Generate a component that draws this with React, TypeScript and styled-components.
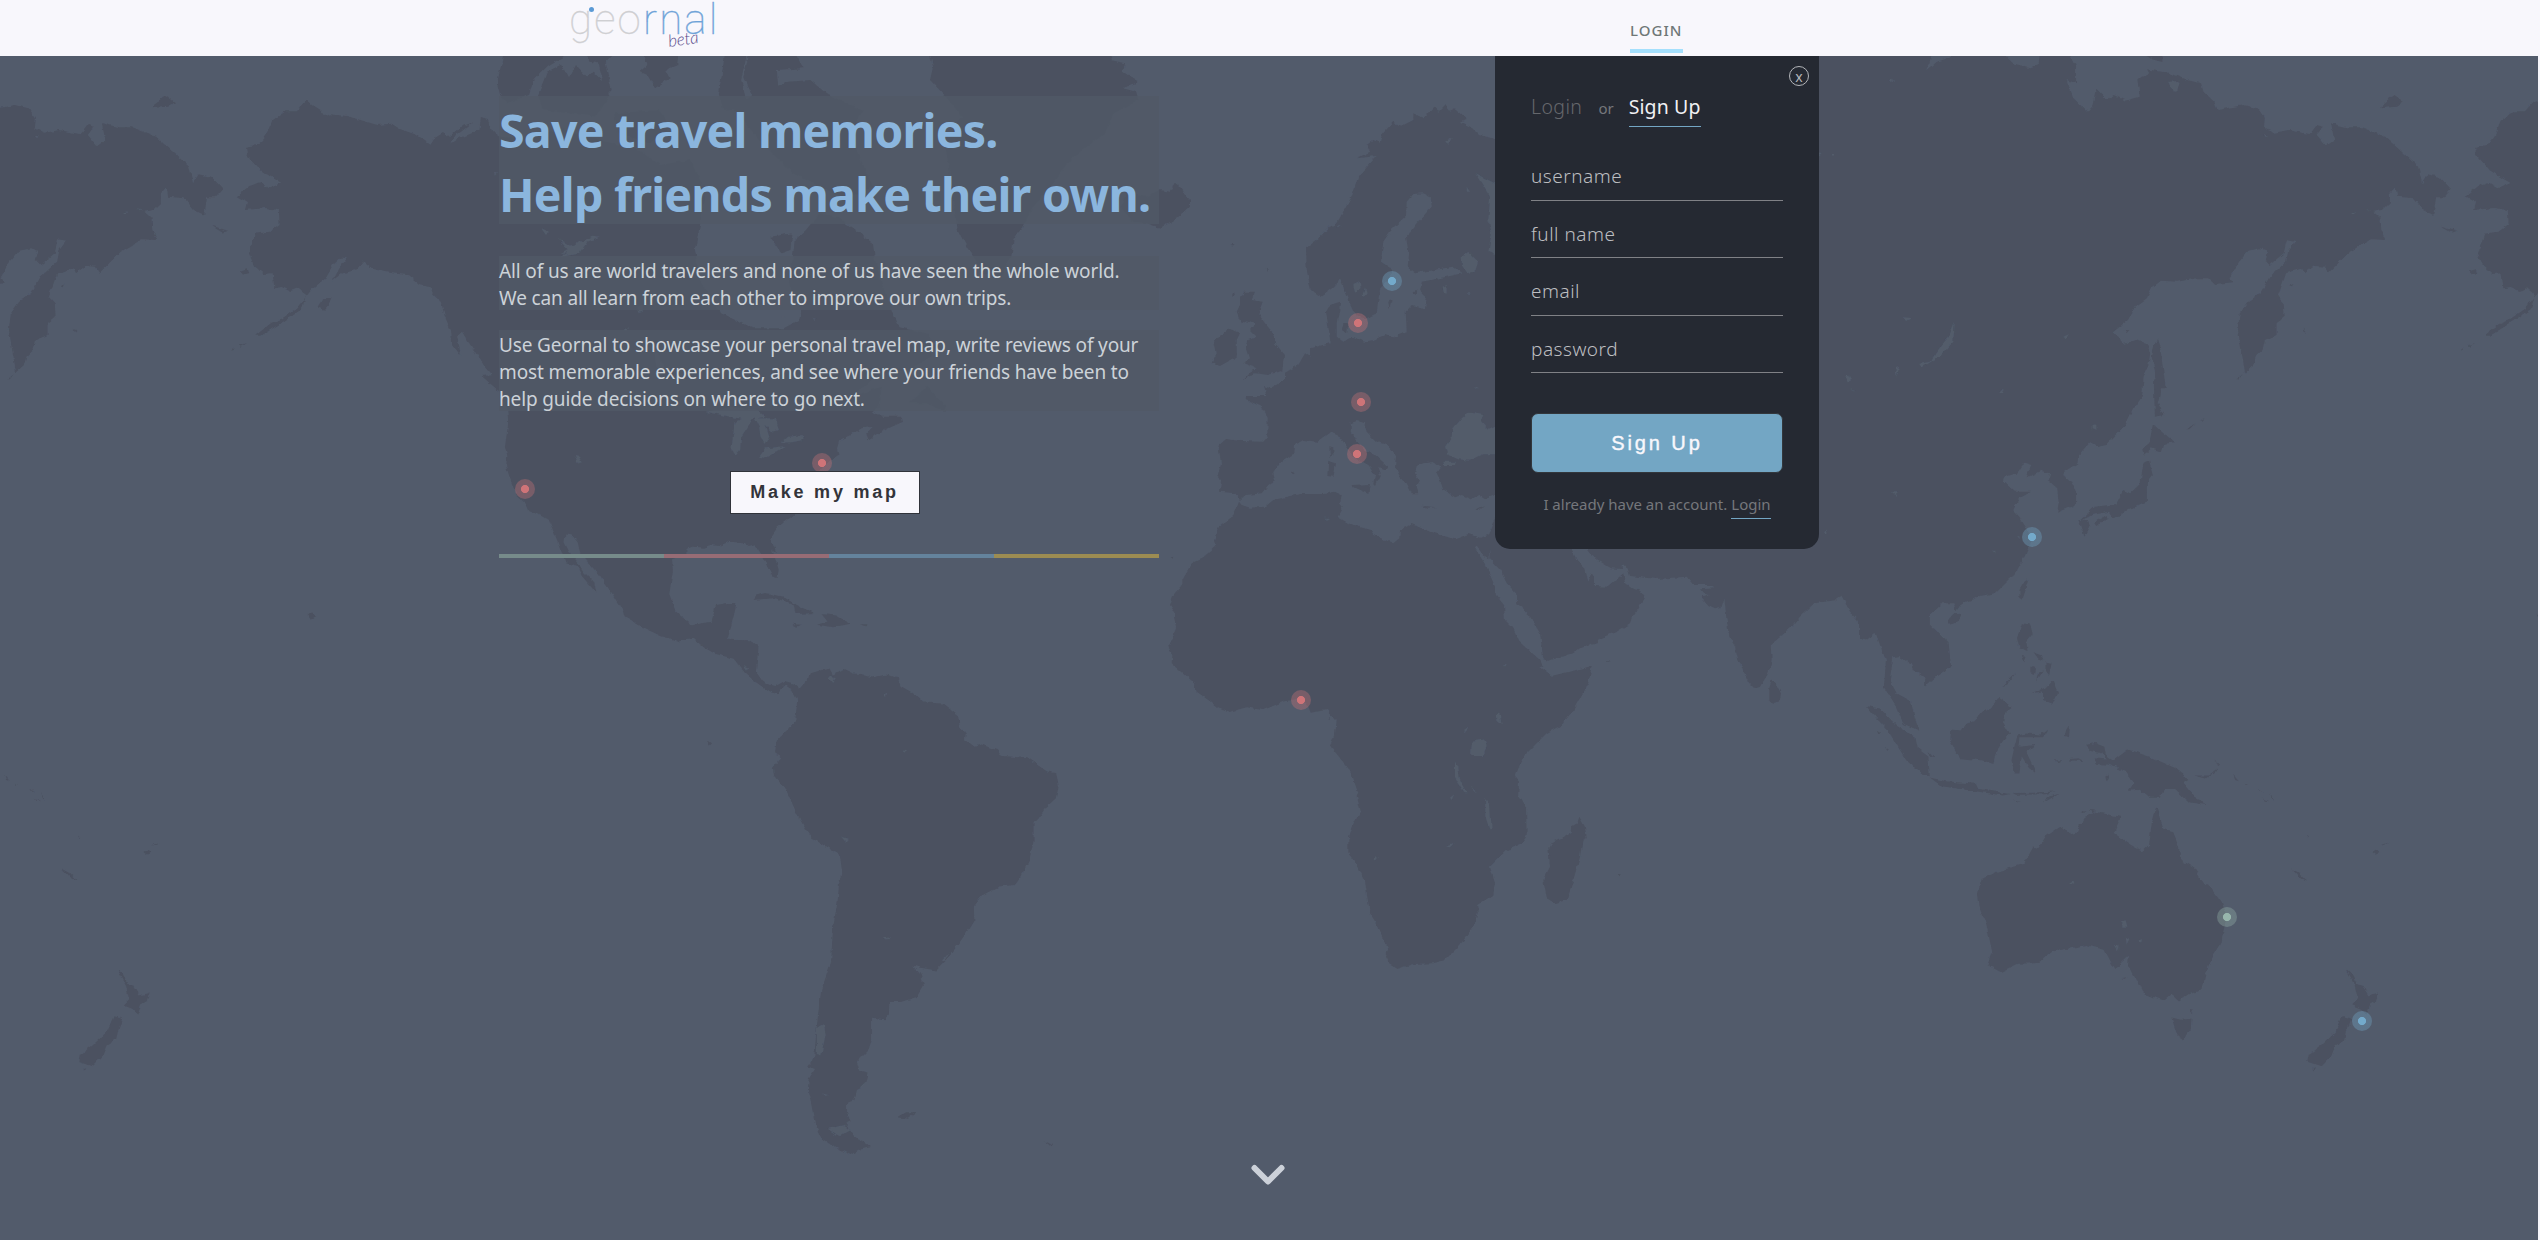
import React from 'react';
import styled, { createGlobalStyle } from 'styled-components';

/* ---------- map data ---------- */

// Each sheet covers one part of the world; its points are scaled onto the page.
const sheets = {
  page: [1, 1, 0, 0],
  pacific: [2.45, 2.529, 0, 40],
  arctic: [2.24, 3, 480, 0],
  north: [2.24, 3, 480, 240],
  south: [2.8, 2.0103, 640, 400],
  europe: [3, 3, 1140, 40],
  africa: [3, 3, 1140, 480],
  india: [3, 3, 1480, 500],
  siberia: [2.119, 3, 1800, 40],
  oceania: [2.119, 2.613, 1800, 500],
} as const;

type Sheet = keyof typeof sheets;
type Stretch = [Sheet, string];

const toPath = (shape: Stretch[]) => {
  const out: string[] = [];
  shape.forEach(([name, text]) => {
    const [sx, sy, ox, oy] = sheets[name];
    const n = text.trim().split(/[\s,]+/).map(Number);
    for (let i = 0; i + 1 < n.length; i += 2) {
      out.push(`${(ox + n[i] / sx).toFixed(1)} ${(oy + n[i + 1] / sy).toFixed(1)}`);
    }
  });
  return `M${out.join('L')}Z`;
};

const continents: Stretch[][] = [
  // North America
  [
    ['pacific', '750 152,765 165,785 178,795 192,810 188,850 192,885 203,925 215,960 212,980 225,1015 238,1055 265,1065 248,1085 235,1100 245,1125 222,1158 208,1130 232,1110 245,1102 265,1125 248,1155 235,1175 225,1178 195,1195 200,1210 235,1225 245'],
    ['page', '530 138,560 128,600 140,640 150,660 165,690 160,700 180,705 200,700 225,695 250,700 280,712 300'],
    ['north', '540 220,610 265,680 265,715 240,720 210,700 170,690 120,700 60,705 0'],
    ['arctic', '730 690,760 640,800 650,850 700'],
    ['north', '880 10,885 60,900 130,925 220,940 262,1000 280,1020 320,1010 350,960 390,900 400,870 430,830 470,900 440,895 500,880 515,900 530,945 530,948 545,915 565,870 598,865 580,880 560,855 565,830 585,805 600,800 625,803 645,775 670,760 700,740 750,735 780,700 825,665 865,650 895,665 940'],
    ['south', '370 300,388 340,385 358,370 355,345 318,320 290,300 294,285 287,250 285,225 292,205 290,180 297,150 295,130 300,130 310,90 320,92 345,82 390,100 425,145 453,200 445,213 412,245 408,270 408,262 435,245 482,310 483,332 495,325 545,350 570,380 575,405 565,430 570,447 580,435 600,420 580,405 572,385 592,355 583,320 565,295 550,262 520,210 510,180 498,150 480,110 485,60 475,0 455'],
    ['pacific', '1530 1460,1525 1440,1500 1400,1465 1350,1440 1320,1422 1300,1415 1270,1400 1250,1385 1248,1383 1270,1395 1295,1415 1320,1430 1345,1455 1370,1462 1400,1425 1355,1415 1330,1385 1320,1365 1265,1345 1215,1320 1200,1297 1192,1290 1175,1265 1150,1250 1110,1240 1078,1243 1050,1237 1030,1245 970,1243 935,1225 890,1180 850,1205 848,1190 830,1165 790,1145 760,1132 738,1120 750,1130 800,1108 770,1105 735,1090 700,1080 660,1060 640,1055 625,1030 620,1000 595,950 588,910 578,890 560,875 580,840 590,815 610,830 580,850 552,835 550,815 570,795 605,765 630,745 655,725 680,690 705,665 715,625 748,640 748,690 715,740 680,750 645,730 628,712 635,690 625,672 628,668 590,645 592,622 570,610 540,625 490,660 485,685 465,683 430,650 425,600 430,605 410,580 395,610 370,635 360,660 375,690 362,670 350,640 330,605 290,603 270,635 265,650 245,665 205,700 180,725 180'],
  ],
  // South America
  [['south', '430 570,447 580,470 562,475 550,500 545,530 540,540 552,570 541,597 550,620 551,650 558,690 552,722 560,730 575,762 588,795 608,850 610,890 632,895 655,912 670,910 682,937 697,955 692,1000 704,1010 715,1085 720,1140 747,1165 750,1173 775,1165 800,1135 820,1112 845,1102 850,1102 885,1090 925,1065 960,1050 975,1005 978,960 995,935 1018,936 1045,910 1075,885 1100,860 1125,830 1147,790 1142,765 1137,785 1155,795 1175,775 1200,730 1210,698 1210,697 1235,685 1245,650 1242,650 1285,640 1305,607 1330,615 1348,637 1352,632 1370,607 1388,600 1408,580 1412,580 1435,590 1450,575 1455,600 1480,645 1502,610 1508,590 1518,540 1500,510 1485,490 1455,478 1410,470 1390,472 1365,490 1345,470 1340,488 1320,495 1260,500 1225,508 1185,535 1130,540 1060,553 1010,557 975,565 945,560 915,480 880,457 855,435 825,410 785,375 755,372 738,395 718,378 710,383 685,410 665,435 645,440 605']],
  // Greenland
  [
    ['arctic', '1005 150,1015 200,1008 240,1040 285,1080 350,1040 420,1050 500,1060 600,1070 690'],
    ['north', '1090 20,1130 100,1165 110,1190 50,1195 0'],
    ['arctic', '1215 680,1240 620,1300 520,1330 470,1400 400,1420 340,1475 300,1470 275,1440 265,1475 245,1440 215,1445 190,1412 180,1420 150'],
  ],
  // Eurasia and Africa
  [
    ['europe', '880 200,895 215,915 195,930 212,945 205,980 235,960 245,1000 265,1020 285,1065 297'],
    ['page', '1600 150,1750 100'],
    ['siberia', '40 40,280 40,270 90,290 65,320 52,330 40,430 40,455 75,490 85,508 70,510 40,570 40,585 80,585 130,565 120,580 175,608 215,620 195,627 145,650 178,665 165,690 182,720 170,715 120,740 100,735 88,780 98,820 120,850 130,855 155,878 185,885 210,940 195,970 205,985 235,983 265,1005 278,1035 270,1080 283,1095 255,1108 260,1095 285,1115 318,1132 300,1125 250,1160 262,1190 262,1240 290,1275 335,1310 380,1318 430,1330 403,1355 410,1380 448,1365 472,1348 472,1342 525,1320 510,1300 475,1265 470,1262 440,1250 460,1250 490,1235 510,1215 515,1230 535,1232 570,1242 600,1210 598,1165 635,1120 698,1112 680,1090 678,1070 700,1065 685,1030 700,1020 740,1012 770,1025 790,1027 830,1010 850,1010 885,985 900,980 930,965 950,960 975,943 997,935 930,928 870,932 820,950 785,975 760,995 710,1030 665,1035 630,1050 602,1032 598,1025 640,995 675,985 660,990 632,975 625,950 632,925 675,910 715,920 730,880 735,865 715,840 715,800 725,765 722,745 745,735 775,710 800,695 840,662 878,680 895,685 912,710 900,735 910,742 940,738 980,728 1010,725 1070,705 1110,690 1155,665 1190,650 1215,632 1220,615 1207,590 1245,588 1270,560 1295,558 1305,575 1330,585 1355,585 1395,545 1418,548 1390,545 1345,525 1320,530 1300,510 1292,478 1315,490 1275,475 1268,460 1300,435 1310,432 1325,455 1355,490 1355,465 1375,450 1408,465 1430,480 1465'],
    ['oceania', '493 100,475 150,455 195,415 243,385 250,340 272,330 290,325 270,300 270,275 300,275 325,315 375,320 435,290 460,265 487,265 465,240 445,235 430,210 408,198 410,190 470,205 505,235 525,243 570,253 603,220 585,205 540,178 490,182 420,160 347,140 367,125 362,125 320,105 290,88 250,75 262,30 270,0 305'],
    ['india', '940 375,880 425,872 440,875 480,865 520,840 560,822 567,805 550,790 510,775 480,765 440,748 410,740 360,733 295,725 320,705 325,685 315,665 292,690 285,675 282,660 265,705 262,690 255,640 255,620 230,530 237,450 228,440 197,428 197,428 207,390 205,350 180,325 148,310 120,265 120,275 148,290 180,315 205,325 245,335 220,342 230,342 258,385 260,430 220,435 250,455 265,480 272,495 293,470 335,455 355,450 370,410 395,360 415,350 430,300 445,280 460,205 482,190 478,185 440,180 400,150 350,112 310,108 280,80 250,60 210,32 180'],
    ['africa', '1048 235,1050 210,1045 235,1030 225,1010 200,1005 205,1040 260,1065 320,1068 345,1092 375,1095 420,1120 445,1138 485,1200 540,1210 560,1200 560,1235 587,1275 578,1355 558,1345 610,1300 690,1265 735,1220 760,1150 830,1125 890,1137 905,1135 945,1158 980,1160 1065,1140 1095,1100 1110,1050 1160,1065 1210,1060 1245,1012 1275,1013 1300,1000 1340,960 1395,915 1440,880 1450,820 1452,772 1467,748 1450,738 1430,745 1405,715 1340,690 1300,682 1250,675 1205,655 1160,625 1120,625 1080,640 1035,662 990,650 950,655 940,635 885,625 865,570 797,585 760,590 722,560 690,512 698,505 680,480 655,430 665,370 690,320 682,265 697,235 685,205 660,170 635,158 605,120 570,95 550,97 525,85 500,100 470,108 440,102 410,103 395,90 375,100 345,130 310,130 295,160 245,190 232,225 200,222 180,235 140,280 108,297 65,305 75,330 83,375 80,400 60,480 42,550 42,585 35,605 45,600 70,608 80,592 110,630 132,690 150,700 165,760 190,778 175,780 150,815 132,870 155,945 178,985 162,1020 173,1045 165,1065 110'],
    ['europe', '1085 1365,1065 1365,1035 1378,1015 1365,995 1378,965 1365,945 1372,910 1350,900 1320,890 1300,905 1280,880 1266,850 1270,830 1278,825 1300,840 1320,830 1340,835 1360,815 1360,800 1330,780 1310,765 1280,768 1245,740 1215,710 1205,680 1175,672 1150,650 1143,632 1150,632 1175,650 1200,680 1235,700 1240,745 1280,740 1290,715 1280,722 1300,705 1335,700 1330,705 1305,690 1280,640 1250,610 1205,595 1185,570 1177,530 1205,490 1200,465 1215,463 1240,420 1270,400 1300,405 1320,385 1335,365 1360,320 1365,303 1380,285 1360,240 1355,243 1320,232 1310,243 1270,235 1215,255 1197,300 1203,370 1205,382 1190,383 1130,365 1100,320 1080,322 1068,380 1068,372 1038,390 1045,435 1020,435 998,475 975,495 940,510 950,510 925,545 915,572 910,565 860,558 815,570 795,600 785,598 810,590 850,590 890,610 905,640 890,670 905,700 900,740 882,760 892,800 875,797 815,815 795,855 805,860 775,840 755,845 725,920 710,965 700,940 680,850 695,825 700,800 680,805 635,798 590,830 550,875 500,872 470,850 460,820 462,800 485,798 530,750 575,730 605,723 665,760 690,745 720,720 745,710 820,680 835,650 830,625 775,600 718,585 740,545 770,512 750,500 690,498 625,530 600,570 560,590 550,635 470,645 440,655 410,710 348,650 355,690 335,680 315,700 300,720 310,725 285,760 245,780 260,820 240,820 220,850 235'],
  ],
  // Australia
  [['oceania', '755 803,770 860,790 865,803 905,806 940,835 962,855 1000,865 1005,895 1055,905 1090,890 1160,875 1190,858 1245,853 1282,825 1290,803 1308,787 1290,770 1307,730 1292,720 1265,705 1240,695 1215,697 1190,680 1210,668 1228,645 1175,605 1163,580 1170,535 1180,505 1210,460 1212,425 1233,397 1215,407 1180,395 1110,378 1060,375 1030,385 990,420 970,475 950,495 905,505 910,520 880,550 855,575 873,585 870,600 830,628 815,680 828,665 870,700 900,725 918,740 900,745 845']],
];

const islandSheets: [Sheet, string[]][] = [
  ['arctic', [
    '55 150,38 250,45 285,60 310,110 285,120 240,150 200,210 150',
    '150 215,130 285,140 330,260 350,290 285,275 240,255 215,240 230,215 195,200 230,180 195',
    '235 150,245 185,265 190,285 285,295 270,280 190,310 150',
    '362 150,375 195,358 215,375 225,392 265,425 235,415 210,442 195,445 150',
    '550 150,535 285,545 330,600 320,585 240,600 150',
    '605 150,590 230,610 285,570 330,600 380,640 440,700 520,820 600,880 560,850 470,830 400,860 330,780 285,740 240,690 245,668 260,665 210,725 205,700 150',
    '300 340,400 330,430 380,380 430,310 400',
  ]],
  ['north', ['960 490,1000 440,1045 500,1040 515,1000 490', '650 -10,700 -20,695 30,675 40']],
  ['south', [
    '315 402,325 393,350 388,400 395,445 415,490 428,435 430,430 412,380 398',
    '508 430,550 433,590 450,540 457,495 452,525 445',
    '425 450,452 452,440 456', '615 451,637 451,635 455',
    '722 1442,745 1432,775 1432,750 1445', '1128 1487,1155 1498,1150 1500', '192 685,202 690,195 695',
  ]],
  ['pacific', [
    '752 1452,765 1448,775 1460,762 1467', '520 470,560 483,545 487,530 478',
    '778 675,790 655,812 650,808 665,795 682', '588 585,605 580,608 590,595 593', '585 772,603 766,590 776', '566 786,575 778,572 784',
  ]],
  ['europe', [
    '-60 500,-40 460,20 470,57 450,90 455,105 430,120 440,130 455,150 480,150 500,130 520,95 545,60 563,20 550,-20 545',
    '315 755,345 755,335 780,368 785,355 820,375 850,400 880,405 910,435 945,430 990,385 1005,345 1000,308 1020,330 995,350 985,310 970,330 955,320 925,325 900,350 890,330 870,345 850,320 840,305 850,290 815,300 795,300 770',
    '265 865,300 880,290 900,290 950,240 978,215 968,230 940,222 900,250 885',
    '568 1222,580 1225,580 1245,570 1250', '565 1262,585 1270,578 1310,562 1308', '638 1335,690 1332,685 1362,640 1342',
    '845 1397,890 1402,860 1403', '1005 1410,1035 1395,1020 1410', '452 1297,460 1292,468 1297,460 1303',
    '610 852,625 850,622 880,605 870', '745 785,755 780,748 805', '272 612,284 612,276 620', '376 680,384 685,380 693', '815 755,832 750,830 762',
    '278 760,288 758,276 775',
  ]],
  ['africa', [
    '1318 1010,1335 1040,1340 1075,1328 1080,1320 1130,1300 1200,1280 1260,1245 1270,1220 1255,1210 1200,1230 1160,1225 1100,1235 1085,1265 1075,1295 1055,1297 1038,1312 1030',
    '1398 543,1412 545,1400 549', '1433 1182,1440 1182,1436 1186', '92 232,100 230,98 236', '565 715,571 710,568 718',
  ]],
  ['india', ['875 540,890 555,903 580,900 600,880 608,868 600,868 560']],
  ['siberia', [
    '757 895,765 940,775 1045,765 1045,758 1090,770 1125,752 1130,750 1040,752 990,745 950,750 920',
    '748 1152,770 1180,795 1207,770 1212,765 1235,745 1225,728 1245,725 1225,740 1210',
    '590 1440,610 1440,615 1460,603 1490,597 1470',
    '728 1268,740 1262,748 1305,735 1330,735 1385,715 1395,690 1412,665 1437,655 1415,620 1425,590 1445,625 1400,670 1392,685 1350,700 1360,722 1330,725 1290',
    '625 1445,650 1425,652 1438,630 1455', '1232 205,1235 190,1260 165,1280 187,1265 200,1240 203',
    '725 40,745 58,768 66,768 40', '925 1018,938 1003,930 1018', '818 1168,838 1150,825 1168', '850 1140,858 1133,853 1142',
    '1036 738,1045 732,1042 742', '1065 865,1072 878,1067 875', '688 870,698 870,692 880',
  ]],
  ['oceania', [
    '313 315,325 297,342 298,335 320,318 325', '465 235,480 205,485 210,472 258,465 250',
    '470 322,488 325,493 350,480 370,482 395,465 385,460 360', '490 505,520 490,535 470,547 505,535 535,515 525,515 500',
    '470 408,480 410,475 425', '495 398,512 405,518 420,505 415', '520 425,533 428,528 458,520 445', '488 435,500 440,498 455,488 450', '505 450,515 445,505 465,500 475',
    '428 488,458 450,440 480',
    '420 515,450 542,435 555,430 580,445 610,430 630,415 660,410 690,385 680,340 675,330 655,318 630,320 600,340 602,350 585,370 578,385 555,405 545',
    '140 538,170 545,205 590,245 620,250 650,272 670,275 722,260 718,225 680,185 600,165 575',
    '275 725,310 735,375 742,380 755,445 768,430 772,375 762,300 748', '450 766,490 765,540 762,520 769,460 770', '512 793,530 775,553 766,520 788', '450 782,468 792,460 790',
    '460 615,480 610,510 613,525 600,515 620,465 620,463 645,500 640,480 660,490 685,500 715,485 700,470 670,465 715,455 715,448 680',
    '565 595,572 590,570 620,560 615', '568 677,590 675,602 682,570 681', '540 680,555 680,545 685', '647 720,655 715,650 738',
    '605 640,625 635,645 645,648 665,665 680,695 652,740 670,795 700,825 730,812 740,835 775,862 797,825 790,795 755,770 755,765 778,740 778,720 757,695 760,708 740,690 710,655 692,630 690,622 675,650 678,640 662,615 655',
    '835 720,865 720,885 700,880 710,860 728', '878 680,893 697,885 692', '918 718,930 735,922 732', '940 738,950 745,944 744', '970 753,982 763,975 762', '996 766,1005 785,1000 780', '980 780,995 787,985 786',
    '270 655,285 675,275 672', '163 603,172 610,166 612', '180 645,188 652,185 656', '595 815,608 813,600 819', '612 810,628 812,620 818',
    '787 1352,808 1358,832 1355,830 1380,812 1410,800 1400', '826 1330,833 1332,830 1342',
    '1157 1225,1170 1240,1180 1265,1192 1270,1205 1295,1226 1287,1220 1310,1208 1318,1200 1345,1190 1330,1170 1320,1182 1305,1175 1265',
    '1150 1348,1168 1355,1160 1385,1155 1410,1135 1425,1125 1455,1105 1480,1075 1468,1078 1450,1105 1425,1135 1390', '1086 1487,1092 1485,1088 1493',
    '1040 962,1058 975,1075 995,1060 988', '1213 920,1220 914,1230 920,1220 927', '1230 903,1247 895,1240 901', '1074 876,1080 884,1076 882', '683 1249,692 1247,688 1252',
  ]],
];

const waterSheets: [Sheet, string[]][] = [
  ['pacific', [
    '1365 500,1395 520,1420 515,1450 495,1470 497,1440 510,1418 540,1370 550,1395 535', '1408 1052,1423 1065,1418 1072', '1325 475,1345 485,1335 490', '1210 333,1218 335,1212 341',
  ]],
  ['north', [
    '570 545,590 535,612 535,600 560,585 590,583 630,572 648,563 630', '505 515,560 500,620 510,640 530,600 540,560 530',
    '615 535,660 535,670 570,655 575,640 555,648 590,640 612,628 590,625 560', '625 650,640 625,685 618,660 640,640 655', '675 608,690 590,722 585,725 600,700 607',
    '180 40,205 20,225 0,235 10,210 35', '355 220,350 200,365 195,365 215', '320 270,332 262,328 272', '675 230,682 225,685 235', '745 230,755 235,748 240', '390 330,405 350,410 400,395 380',
    '212 648,222 650,228 668,218 668',
  ]],
  ['south', ['528 560,538 552,548 562,540 570', '563 878,582 882,575 888', '683 592,693 588,688 597', '736 702,748 704,742 707', '683 1082,700 1080,692 1087', '512 1394,528 1397,518 1399', '495 1262,515 1255,520 1275,508 1318,495 1315', '290 535,306 540,300 545', '525 1465,570 1458,590 1468,560 1480,545 1475', '848 1125,867 1110,855 1127']],
  ['europe', [
    '1110 1243,1030 1243,990 1262,950 1258,925 1245,918 1220,938 1190,940 1165,965 1135,985 1118,1005 1120,1030 1125,1022 1145,1045 1170,1065 1160,1110 1160',
    '965 650,985 635,1015 665,1005 695,980 700,965 675', '1005 400,1065 430,1080 500,1080 650,1045 635,1055 580,1045 540,1050 470', '640 735,660 725,662 745,645 755', '675 745,680 760,670 775,668 762',
    '915 305,933 295,925 312', '908 740,920 735,920 758,910 755', '590 560,605 558,595 567', '980 440,990 455,980 455', '910 1265,948 1265,945 1275,912 1275', '1002 1040,1018 1048,1008 1048', '980 760,992 760,986 768',
  ]],
  ['africa', [
    '995 785,1035 778,1040 800,1028 828,993 828', '945 845,955 860,960 900,983 940,975 940,945 895', '1035 958,1050 970,1055 1045,1048 1045,1036 1010', '1070 695,1078 700,1085 730,1072 720',
    '972 750,985 740,978 757', '930 950,943 940,935 957', '990 920,1012 937,995 930', '700 1135,717 1130,708 1141', '918 1100,942 1090,930 1102', '1092 553,1103 552,1098 560', '552 113,568 113,560 119',
  ]],
  ['siberia', [
    '328 845,325 905,300 945,260 982,250 972,275 965,300 915,315 890', '188 120,194 114,199 122,194 128', '40 340,48 342,42 350', '65 342,76 342,70 348', '220 832,236 834,222 845', '97 1015,104 1006,110 1020,102 1026',
    '202 985,210 980,205 1010', '422 1058,432 1043,428 1060', '558 890,570 882,563 898', '620 1155,628 1152,628 1172,620 1168', '195 1358,202 1352,208 1366', '107 1045,117 1050,112 1052', '1170 520,1180 517,1175 524', '1200 508,1210 510,1205 514', '983 285,992 290,987 295', '780 125,805 122,800 150,790 155',
  ]],
  ['oceania', ['50 85,55 80,60 88', '407 132,416 133,413 140', '570 1000,580 993,581 1003', '683 1100,690 1098,694 1115,683 1115', '690 1143,698 1150,692 1165', '717 1148,725 1145,723 1155', '666 1160,675 1165,674 1178', '460 96,466 92,465 100']],
];

const single = (groups: [Sheet, string[]][]) =>
  groups.map(([name, list]) => list.map((pts) => toPath([[name, pts]])).join('')).join('');

const landPath = continents.map(toPath).join('');
const islandPath = single(islandSheets);
const waterPath = single(waterSheets);

const WORLD_WIDTH = 2229;

type Tone = 'red' | 'blue' | 'green';
const tones: Record<Tone, [string, string]> = {
  red: ['#cf7478', 'rgba(207, 116, 120, 0.34)'],
  blue: ['#73aacb', 'rgba(115, 170, 203, 0.34)'],
  green: ['#97b6ac', 'rgba(151, 182, 172, 0.34)'],
};

const pins: { x: number; y: number; tone: Tone }[] = [
  { x: 525, y: 489, tone: 'red' },
  { x: 822, y: 463, tone: 'red' },
  { x: 1392, y: 281, tone: 'blue' },
  { x: 1358, y: 323, tone: 'red' },
  { x: 1361, y: 402, tone: 'red' },
  { x: 1357, y: 454, tone: 'red' },
  { x: 1301, y: 700, tone: 'red' },
  { x: 2032, y: 537, tone: 'blue' },
  { x: 2227, y: 917, tone: 'green' },
  { x: 2362, y: 1021, tone: 'blue' },
];

/* ---------- styles ---------- */

const GlobalStyle = createGlobalStyle`
  *, *::before, *::after { box-sizing: border-box; }
  body { margin: 0; background: #f8f7fc; overflow: hidden; font-family: "Noto Sans", "Open Sans", sans-serif; }
  h1, p { margin: 0; }
  button { font-family: inherit; cursor: pointer; }
`;

const Page = styled.div`
  display: flex;
  flex-direction: column;
  width: 2538px;
  height: 1240px;
`;

const Nav = styled.header`
  display: flex;
  flex: none;
  justify-content: space-between;
  height: 56px;
  padding: 0 855px 0 569px;
  background: #f8f7fc;
`;

const Logo = styled.a`
  position: relative;
  height: 56px;
  color: #cfcfd2;
  font: 100 42px/39px Roboto, sans-serif;
  letter-spacing: 2.2px;
  -webkit-text-stroke: 0.3px currentColor;
`;

const LogoAccent = styled.span`
  color: #6fa3d8;
`;

const LogoDot = styled.i`
  position: absolute;
  left: 20px;
  top: 7px;
  width: 5px;
  height: 5px;
  border-radius: 50%;
  background: #5b9ad5;
`;

const LogoBeta = styled.small`
  position: absolute;
  left: 99px;
  top: 29px;
  color: #5a4d8c;
  font: italic 300 17px/20px Lato, sans-serif;
  letter-spacing: -0.1px;
  transform: rotate(-8deg);
  -webkit-text-stroke: 0;
`;

const NavLink = styled.a`
  align-self: flex-start;
  width: 53px;
  height: 53px;
  padding-top: 20px;
  border-bottom: 4px solid #a5e0fd;
  color: #6f7777;
  font-size: 15px;
  font-weight: 500;
  line-height: 21px;
  letter-spacing: 1px;
  white-space: nowrap;
`;

const Hero = styled.main`
  position: relative;
  display: flex;
  flex: 1;
  flex-direction: column;
  justify-content: space-between;
  align-items: stretch;
  overflow: hidden;
  background: #525b6b;
`;

const MapArt = styled.svg`
  position: absolute;
  inset: 0;
  width: 100%;
  height: 100%;
`;

const Pin = styled.i<{ $x: number; $y: number; $tone: Tone }>`
  position: absolute;
  left: ${(p) => p.$x - 10}px;
  top: ${(p) => p.$y - 66}px;
  width: 20px;
  height: 20px;
  border-radius: 50%;
  background: radial-gradient(circle, ${(p) => tones[p.$tone][0]} 3.7px, ${(p) => tones[p.$tone][1]} 4.4px);
`;

const Columns = styled.div`
  position: relative;
  display: flex;
  justify-content: space-between;
  align-items: flex-start;
  padding: 0 719px 0 499px;
`;

const Intro = styled.section`
  display: flex;
  flex-direction: column;
  width: 660px;
  padding-top: 40px;
`;

const Title = styled.h1`
  height: 128px;
  margin-bottom: 32px;
  padding-top: 2px;
  background: rgba(80, 89, 102, 0.82);
  color: #8bb6de;
  font-size: 46.5px;
  font-weight: 700;
  line-height: 64px;
  letter-spacing: -0.75px;
  white-space: nowrap;
`;

const Copy = styled.p<{ $lines: number }>`
  height: ${(p) => p.$lines * 27}px;
  margin-bottom: 20px;
  padding-top: 1.5px;
  background: rgba(80, 89, 102, 0.82);
  color: #ccd2d8;
  font-size: 19px;
  line-height: 27px;
  letter-spacing: -0.14px;
  white-space: nowrap;
`;

const MapButton = styled.button`
  align-self: center;
  width: 190px;
  height: 43px;
  margin: 40px 9px 40px 0;
  padding: 0;
  border: 1px solid #30333a;
  background: #f8f7fc;
  color: #33343a;
  font: 700 18px/39px "Liberation Sans", Arial, sans-serif;
  letter-spacing: 2.75px;
`;

const Stripes = styled.div`
  display: grid;
  grid-template-columns: repeat(4, 1fr);
  height: 4px;
`;

const Stripe = styled.i<{ $color: string }>`
  background: ${(p) => p.$color};
`;

const Card = styled.aside`
  display: flex;
  flex-direction: column;
  width: 324px;
  height: 493px;
  padding: 10px 36px 0;
  border-radius: 0 0 15px 15px;
  background: #252932;
`;

const Close = styled.button`
  align-self: flex-end;
  width: 20px;
  height: 20px;
  margin-right: -26px;
  padding: 0;
  border: 1px solid #b4b6ba;
  border-radius: 50%;
  background: none;
  color: #b4b6ba;
  font-size: 14px;
  line-height: 15px;
`;

const Tabs = styled.div`
  display: flex;
  align-items: baseline;
  height: 57px;
  padding-top: 6px;
`;

const Tab = styled.a<{ $active?: boolean }>`
  height: 35px;
  border-bottom: 1px solid ${(p) => (p.$active ? '#73a6c4' : 'transparent')};
  color: ${(p) => (p.$active ? '#f0f0f3' : '#65676c')};
  font-size: 19.5px;
  font-weight: ${(p) => (p.$active ? 400 : 300)};
  line-height: 30px;
  letter-spacing: ${(p) => (p.$active ? 0.1 : 0.4)}px;
  white-space: nowrap;
`;

const Or = styled.span`
  margin: 0 15px 0 16px;
  color: #75777c;
  font-size: 15px;
`;

const Fields = styled.form`
  display: flex;
  flex-direction: column;
`;

const Field = styled.label`
  height: 57.5px;
  padding-top: 20px;
  border-bottom: 1px solid #808186;
  color: #bdbec1;
  font-size: 19px;
  font-weight: 300;
  line-height: 27px;
  letter-spacing: 0.5px;
`;

const Submit = styled.button`
  height: 60px;
  margin-top: 40px;
  padding: 0;
  border: 1px solid #33373c;
  border-radius: 7px;
  background: #73a6c4;
  color: #f8f7fc;
  font: 400 20px/57px "Liberation Sans", Arial, sans-serif;
  letter-spacing: 2.9px;
  -webkit-text-stroke: 0.4px currentColor;
`;

const Footnote = styled.p`
  display: flex;
  justify-content: center;
  gap: 4px;
  margin-top: 18px;
  color: #75777c;
  font-size: 15px;
  line-height: 27px;
  white-space: nowrap;
`;

const FootLink = styled.a`
  border-bottom: 1px solid #73a6c4;
`;

const ScrollCue = styled.div`
  position: relative;
  display: flex;
  justify-content: center;
  padding: 0 3px 52px 0;
`;

/* ---------- page ---------- */

function WorldMap() {
  return (
    <MapArt viewBox="0 56 2538 1184" preserveAspectRatio="none" aria-hidden="true">
      <defs>
        <filter id="coast" filterUnits="userSpaceOnUse" x="0" y="40" width="2540" height="1200">
          <feTurbulence type="fractalNoise" baseFrequency="0.16" numOctaves="2" seed="4" />
          <feDisplacementMap in="SourceGraphic" scale="4.5" xChannelSelector="R" yChannelSelector="G" />
        </filter>
        <g id="world">
          <path d={landPath} fill="#4b5160" />
          <path d={waterPath} fill="#525b6b" />
          <path d={islandPath} fill="#4b5160" />
        </g>
      </defs>
      <g filter="url(#coast)">
        <use href="#world" />
        <use href="#world" x={WORLD_WIDTH} />
        <use href="#world" x={-WORLD_WIDTH} />
      </g>
    </MapArt>
  );
}

const stripeColors = ['#768b8a', '#976c75', '#64839c', '#9c8c52'];
const fieldNames = ['username', 'full name', 'email', 'password'];

export default function App() {
  return (
    <>
      <GlobalStyle />
      <Page>
        <Nav>
          <Logo>
            geo<LogoAccent>rnal</LogoAccent>
            <LogoDot />
            <LogoBeta>beta</LogoBeta>
          </Logo>
          <NavLink>LOGIN</NavLink>
        </Nav>
        <Hero>
          <WorldMap />
          {pins.map((pin) => (
            <Pin key={`${pin.x}-${pin.y}`} $x={pin.x} $y={pin.y} $tone={pin.tone} />
          ))}
          <Columns>
            <Intro>
              <Title>
                Save travel memories.
                <br />
                Help friends make their own.
              </Title>
              <Copy $lines={2}>
                All of us are world travelers and none of us have seen the whole world.
                <br />
                We can all learn from each other to improve our own trips.
              </Copy>
              <Copy $lines={3}>
                Use Geornal to showcase your personal travel map, write reviews of your
                <br />
                most memorable experiences, and see where your friends have been to
                <br />
                help guide decisions on where to go next.
              </Copy>
              <MapButton>Make my map</MapButton>
              <Stripes>
                {stripeColors.map((color) => (
                  <Stripe key={color} $color={color} />
                ))}
              </Stripes>
            </Intro>
            <Card>
              <Close>x</Close>
              <Tabs>
                <Tab>Login</Tab>
                <Or>or</Or>
                <Tab $active>Sign Up</Tab>
              </Tabs>
              <Fields>
                {fieldNames.map((name) => (
                  <Field key={name}>{name}</Field>
                ))}
                <Submit type="button">Sign Up</Submit>
              </Fields>
              <Footnote>
                I already have an account. <FootLink>Login</FootLink>
              </Footnote>
            </Card>
          </Columns>
          <ScrollCue>
            <svg width="34" height="24" viewBox="0 0 34 24" fill="none">
              <path d="M3.5 4L17 17.5L30.500 4" stroke="#ccd1d9" strokeWidth="6" strokeLinecap="round" strokeLinejoin="round" />
            </svg>
          </ScrollCue>
        </Hero>
      </Page>
    </>
  );
}
